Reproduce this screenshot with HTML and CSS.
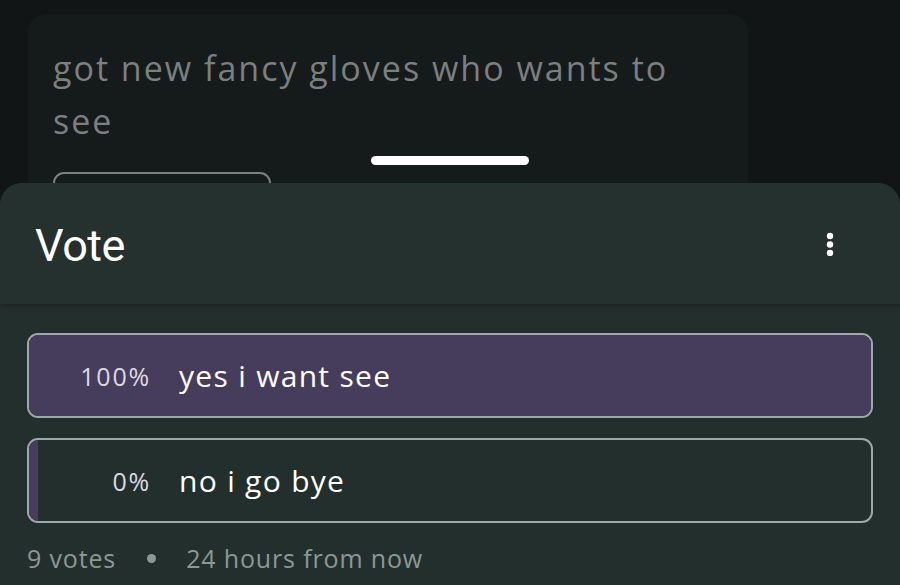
FILE: index.html
```html
<!DOCTYPE html>
<html>
<head>
<meta charset="utf-8">
<link rel="stylesheet" href="styles.css">
</head>
<body>
<div class="feed">
  <div class="card">
    <p class="post-text">got new fancy gloves who wants to see</p>
    <div class="outline-btn"></div>
  </div>
</div>
<div class="handle"></div>
<div class="sheet">
  <div class="sheet-header">
    <h1 class="title">Vote</h1>
    <svg class="kebab" width="8" height="24" viewBox="0 0 8 24"><circle cx="4" cy="4" r="3.2" fill="#fff"/><circle cx="4" cy="12.5" r="3.2" fill="#fff"/><circle cx="4" cy="21" r="3.2" fill="#fff"/></svg>
  </div>
  <div class="sheet-body">
    <div class="option">
      <div class="fill" style="width:100%"></div>
      <span class="pct">100%</span>
      <span class="label">yes i want see</span>
    </div>
    <div class="option">
      <div class="fill fill-min"></div>
      <span class="pct">0%</span>
      <span class="label">no i go bye</span>
    </div>
    <div class="meta">
      <span>9 votes</span>
      <span class="dot"></span>
      <span>24 hours from now</span>
    </div>
  </div>
</div>
</body>
</html>
```
FILE: styles.css
```css
html, body {
  margin: 0;
  padding: 0;
}
body {
  width: 900px;
  height: 585px;
  overflow: hidden;
  background: #111516;
  font-family: "Open Sans", "Noto Sans", sans-serif;
  position: relative;
}
.feed {
  padding: 14px 0 0 28px;
}
.card {
  width: 720px;
  height: 260px;
  background: #151a1b;
  border-radius: 18px;
  padding: 28px 25px 0;
  box-sizing: border-box;
}
.post-text {
  margin: 0;
  font-size: 34px;
  line-height: 53px;
  letter-spacing: 2px;
  color: #7b7f80;
  width: 660px;
}
.outline-btn {
  margin-top: 24px;
  width: 218px;
  height: 60px;
  border: 2px solid #7b7f80;
  border-radius: 11px;
  box-sizing: border-box;
}
.handle {
  position: absolute;
  left: 371px;
  top: 156px;
  width: 158px;
  height: 9px;
  border-radius: 5px;
  background: #ffffff;
}
.sheet {
  position: absolute;
  left: 0;
  right: 0;
  top: 183px;
  bottom: 0;
  background: #232f2d;
  border-radius: 22px 22px 0 0;
  overflow: hidden;
}
.sheet-header {
  height: 121px;
  background: #25312f;
  display: flex;
  align-items: center;
  justify-content: space-between;
  padding: 0 66px 0 35px;
  box-shadow: 0 2px 4px rgba(0,0,0,0.25);
  position: relative;
}
.title {
  margin: 0;
  font-family: "Roboto", sans-serif;
  font-weight: 400;
  font-size: 45px;
  color: #ffffff;
  letter-spacing: -0.5px;
  margin-top: 3px;
}
.kebab {
  display: block;
}
.sheet-body {
  padding: 29px 27px 0;
  display: flex;
  flex-direction: column;
  gap: 20px;
}
.option {
  position: relative;
  height: 85px;
  border: 2px solid #9ca9a6;
  border-radius: 11px;
  box-sizing: border-box;
  display: flex;
  align-items: center;
  overflow: hidden;
}
.fill {
  position: absolute;
  left: 0;
  top: 0;
  bottom: 0;
  background: #463d5c;
}
.fill-min {
  width: 9px;
}
.pct {
  position: relative;
  width: 122px;
  text-align: right;
  font-size: 25px;
  letter-spacing: 1.8px;
  color: #dcd9e2;
}
.label {
  position: relative;
  margin-left: 28px;
  font-size: 30px;
  letter-spacing: 1.3px;
  color: #ffffff;
}
.meta {
  margin-top: -2px;
  display: flex;
  align-items: center;
  font-size: 25px;
  letter-spacing: 0.85px;
  color: #8b9895;
}
.dot {
  width: 9px;
  height: 9px;
  border-radius: 50%;
  background: #8b9895;
  margin: 0 30px 0 31px;
}
```
